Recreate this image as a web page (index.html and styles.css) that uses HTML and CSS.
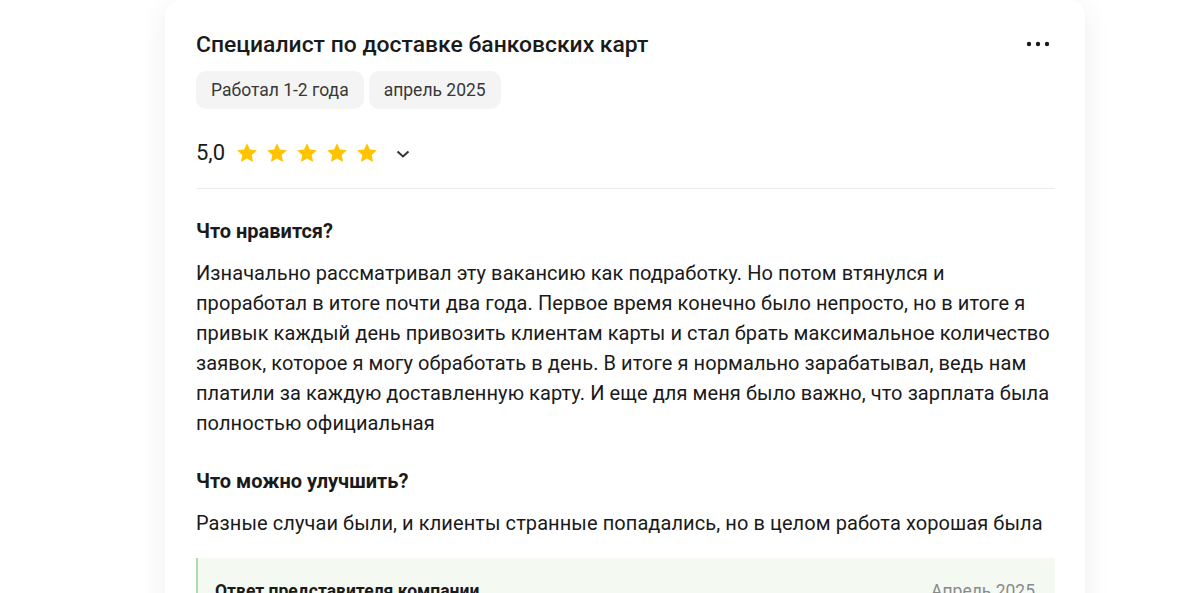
FILE: index.html
```html
<!DOCTYPE html>
<html lang="ru">
<head>
  <meta charset="UTF-8" />
  <meta name="viewport" content="width=device-width, initial-scale=1.0" />
  <title>Отзыв</title>
  <link rel="stylesheet" href="styles.css">
</head>
<body>
  <div class="page">
    <div class="card">
      <div class="head">
        <h1 class="title">Специалист по доставке банковских карт</h1>
        <button class="more" aria-label="Ещё">
          <svg width="26" height="6" viewBox="0 0 26 6"><circle cx="4" cy="3" r="2.2"/><circle cx="13" cy="3" r="2.2"/><circle cx="22" cy="3" r="2.2"/></svg>
        </button>
      </div>
      <div class="tags">
        <span class="tag">Работал 1-2 года</span>
        <span class="tag">апрель 2025</span>
      </div>
      <div class="rating">
        <span class="score">5,0</span>
        <div class="stars">
          <svg viewBox="0 0 24 24"><path d="M12 2.2l2.95 6.4 6.9.75-5.15 4.7 1.45 6.85L12 17.4l-6.15 3.5 1.45-6.85-5.15-4.7 6.9-.75z"/></svg>
          <svg viewBox="0 0 24 24"><path d="M12 2.2l2.95 6.4 6.9.75-5.15 4.7 1.45 6.85L12 17.4l-6.15 3.5 1.45-6.85-5.15-4.7 6.9-.75z"/></svg>
          <svg viewBox="0 0 24 24"><path d="M12 2.2l2.95 6.4 6.9.75-5.15 4.7 1.45 6.85L12 17.4l-6.15 3.5 1.45-6.85-5.15-4.7 6.9-.75z"/></svg>
          <svg viewBox="0 0 24 24"><path d="M12 2.2l2.95 6.4 6.9.75-5.15 4.7 1.45 6.85L12 17.4l-6.15 3.5 1.45-6.85-5.15-4.7 6.9-.75z"/></svg>
          <svg viewBox="0 0 24 24"><path d="M12 2.2l2.95 6.4 6.9.75-5.15 4.7 1.45 6.85L12 17.4l-6.15 3.5 1.45-6.85-5.15-4.7 6.9-.75z"/></svg>
        </div>
        <svg class="chevron" width="14" height="8" viewBox="0 0 14 8"><path d="M1.5 1.5l5.5 5 5.5-5"/></svg>
      </div>
      <hr class="divider" />
      <h2 class="label">Что нравится?</h2>
      <p class="text">Изначально рассматривал эту вакансию как подработку. Но потом втянулся и проработал в итоге почти два года. Первое время конечно было непросто, но в итоге я привык каждый день привозить клиентам карты и стал брать максимальное количество заявок, которое я могу обработать в день. В итоге я нормально зарабатывал, ведь нам платили за каждую доставленную карту. И еще для меня было важно, что зарплата была полностью официальная</p>
      <h2 class="label">Что можно улучшить?</h2>
      <p class="text">Разные случаи были, и клиенты странные попадались, но в целом работа хорошая была</p>
      <div class="answer">
        <div class="answer-head">
          <span class="answer-title">Ответ представителя компании</span>
          <span class="answer-date">Апрель 2025</span>
        </div>
      </div>
    </div>
  </div>
</body>
</html>
```

FILE: styles.css
```css
body {
  margin: 0;
  background: #fff;
  font-family: Roboto, "Noto Sans", Arial, sans-serif;
  color: #1a1a1a;
}
.page {
  padding-left: 165px;
  height: 593px;
  overflow: hidden;
}
.card {
  width: 920px;
  box-sizing: border-box;
  padding: 31px 30px 40px 31px;
  background: #fff;
  border-radius: 16px;
  box-shadow: 0 4px 28px rgba(0, 0, 0, 0.07);
}
.head {
  display: flex;
  justify-content: space-between;
  align-items: flex-start;
}
.title {
  margin: 0;
  font-size: 22.9px;
  line-height: 28px;
  font-weight: 500;
}
.more {
  border: 0;
  background: none;
  padding: 0;
  margin: 10px 4px 0 0;
  line-height: 0;
  cursor: pointer;
}
.more svg {
  fill: #1a1a1a;
}
.tags {
  display: flex;
  gap: 5px;
  margin-top: 12px;
}
.tag {
  background: #f4f4f4;
  border-radius: 10px;
  padding: 8px 15px;
  font-size: 17.5px;
  line-height: 22px;
  color: #383838;
}
.rating {
  display: flex;
  align-items: center;
  height: 32px;
  margin-top: 28px;
}
.score {
  font-size: 22px;
  line-height: 32px;
  margin-right: 10px;
}
.stars {
  display: flex;
  gap: 6px;
}
.stars svg {
  width: 24px;
  height: 24px;
  fill: #ffc300;
}
.chevron {
  margin-left: 17px;
  margin-top: 2px;
  fill: none;
  stroke: #333;
  stroke-width: 2;
}
.divider {
  border: 0;
  border-top: 1px solid #ebebeb;
  margin: 19px 0 0;
}
.label {
  margin: 29px 0 0;
  font-size: 20px;
  line-height: 26px;
  font-weight: 700;
  color: #1a1a1a;
}
.text + .label {
  margin-top: 30px;
}
.text {
  margin: 14px 0 0;
  font-size: 20px;
  line-height: 30px;
  letter-spacing: 0.08px;
}
.answer {
  margin-top: 20px;
  background: #f4f9f2;
  border-left: 2px solid #a8dca8;
  padding: 22px 20px 20px 17px;
}
.answer-head {
  display: flex;
  justify-content: space-between;
  align-items: baseline;
}
.answer-title {
  font-size: 17.5px;
  line-height: 22px;
  font-weight: 700;
}
.answer-date {
  font-size: 17.5px;
  line-height: 22px;
  color: #8a8a8a;
}
```
